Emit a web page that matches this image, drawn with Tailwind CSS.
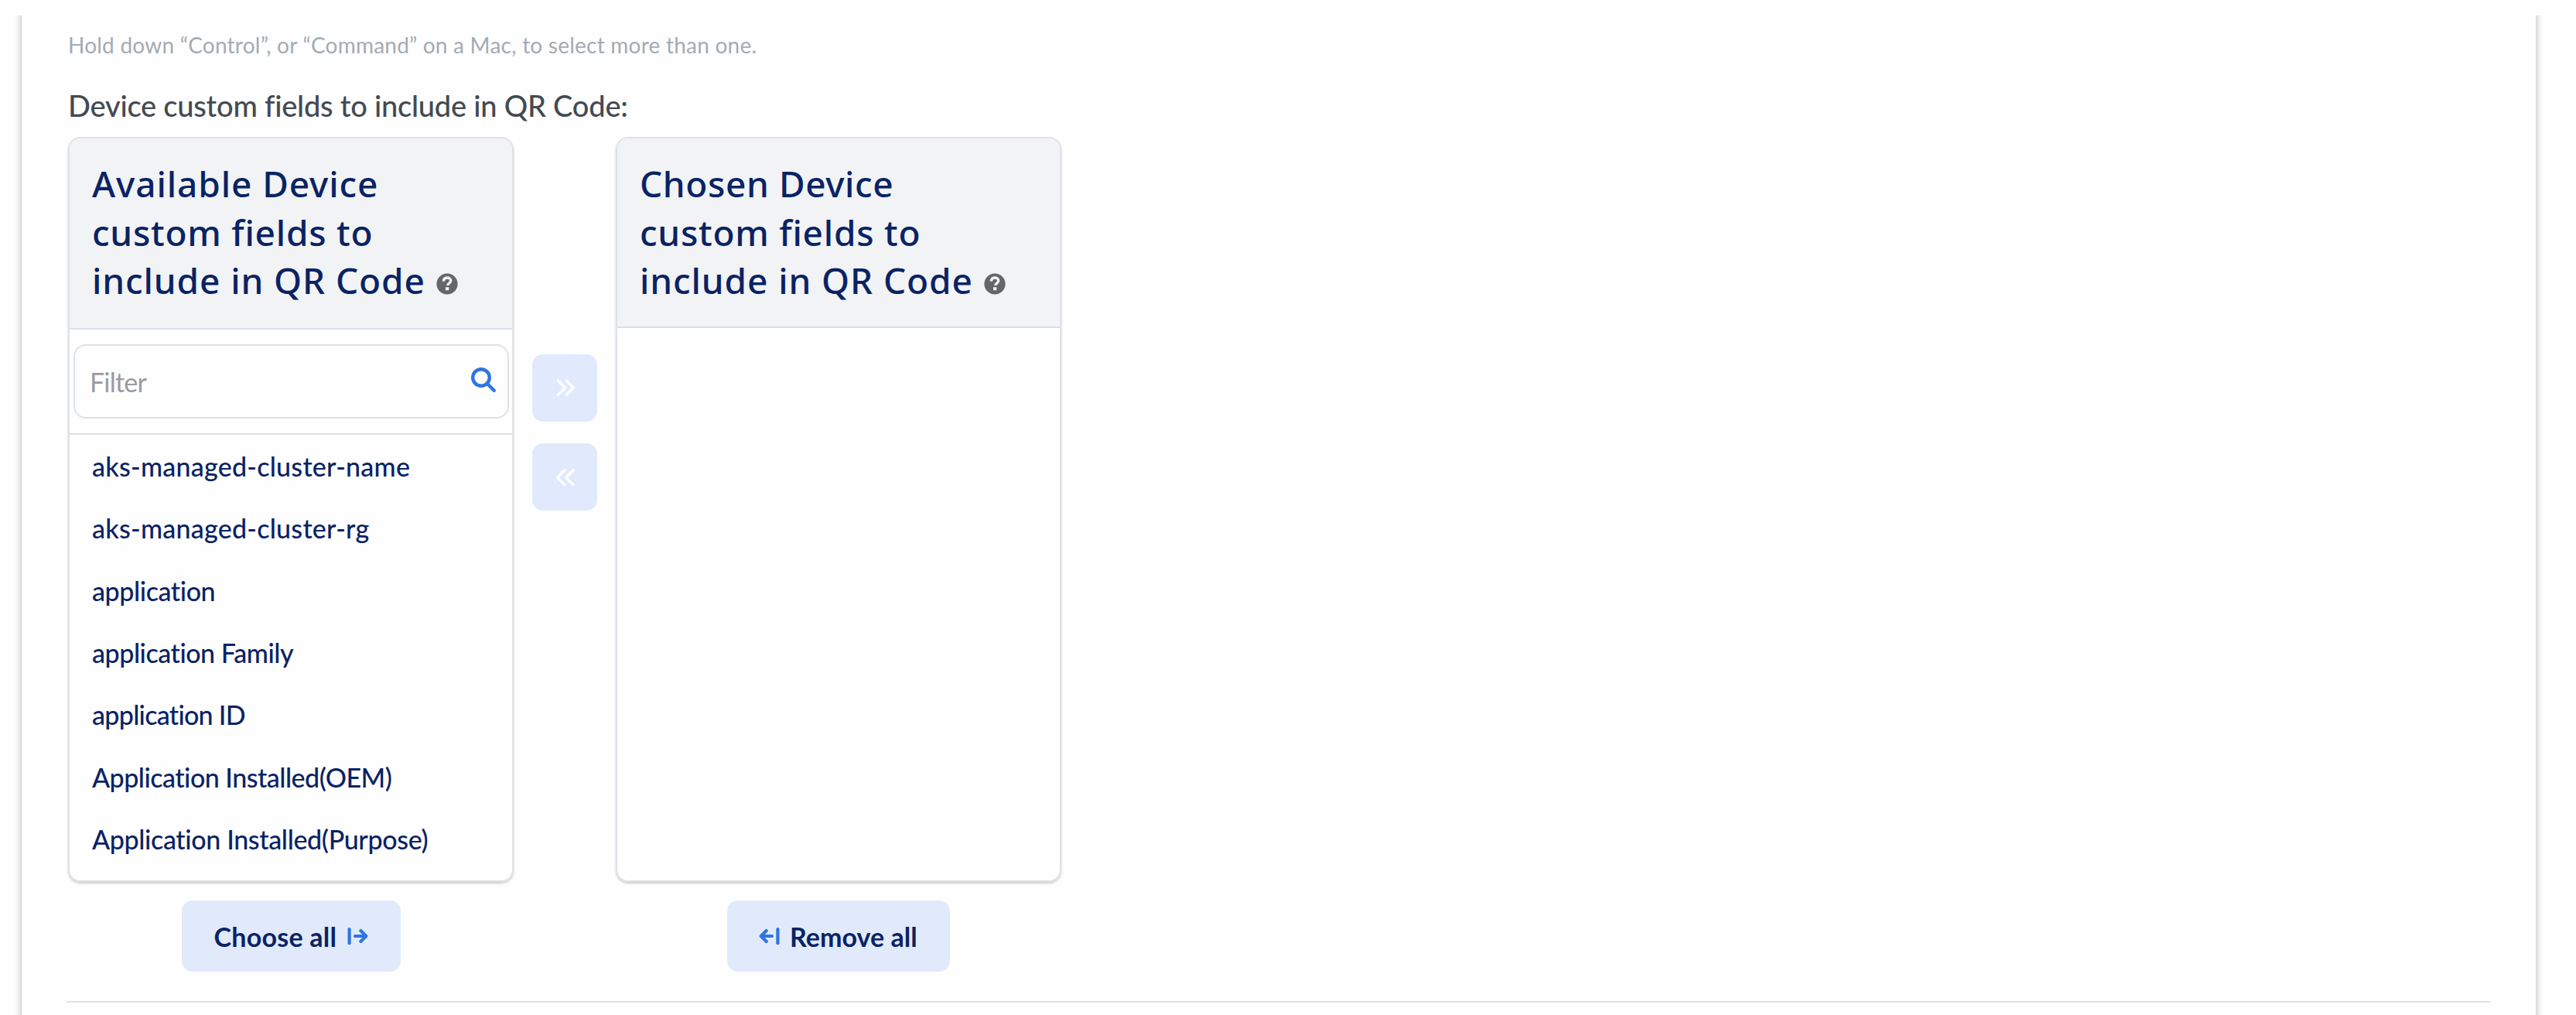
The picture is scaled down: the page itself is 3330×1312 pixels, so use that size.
<!DOCTYPE html>
<html lang="en">
<head>
<meta charset="utf-8">
<title>Device custom fields</title>
<script src="https://cdn.jsdelivr.net/npm/@tailwindcss/browser@4"></script>
</head>
<body class="bg-[#fefefe] font-['Lato',sans-serif] text-[#0a2364]">
<div class="h-[1312px] overflow-hidden pt-5">
<div class="h-[1292px] overflow-hidden">
<main class="-mt-5 ml-7 h-[1352px] w-[3250px] px-[58px] pt-[33px] shadow-[0_0_9px_rgba(0,0,0,0.32)]">
  <div class="px-0.5">
    <p class="h-10 text-[28px] leading-10 tracking-[0.23px] text-[#a4abb3] pt-[5px]">Hold down “Control”, or “Command” on a Mac, to select more than one.</p>
    <h2 class="mt-[38px] h-[66px] text-[38px] font-medium leading-[50px] tracking-[-0.22px] text-[#444a51]">Device custom fields to include in QR Code:</h2>

    <div class="flex">
      <section class="w-[576px]">
        <div class="h-[963px] overflow-hidden rounded-[16px] border-2 border-[#dee1e7] shadow-[0_2px_3px_rgba(0,0,0,0.2)]">
          <h3 class="h-[247px] border-b-2 border-[#dee1e7] bg-[#f2f3f5] pl-[29px] pt-[27px] font-['Noto_Sans',sans-serif] text-[46px] font-medium leading-[62.5px] tracking-[0.9px]">Available Device<br><span class="tracking-[0.75px]">custom fields to</span><br><span class="flex items-center whitespace-nowrap">include in QR Code
            <svg class="ml-[14px] mt-[10px] size-7" viewBox="0 0 28 28"><circle cx="14" cy="14" r="13.6" fill="#666"/><path d="M9.3 10.6C9.5 7.4 11.5 6 14 6c2.7 0 4.7 1.5 4.7 4 0 3.2-3.9 3.1-3.9 6" fill="none" stroke="#f2f3f5" stroke-width="3.4"/><rect x="12" y="18.2" width="4.3" height="4" fill="#f2f3f5"/></svg></span></h3>
          <div class="h-[136px] border-b-2 border-[#dedede] px-[5px] pt-[19px] pr-1">
            <div class="flex h-24 items-center justify-between rounded-[16px] border-2 border-[#dee1e7] pl-[19px] pr-[15px]">
              <span class="text-[34px] tracking-[-0.8px] text-[#9b9b9f]">Filter</span>
              <svg class="-mt-1 size-8" viewBox="0 0 32 32" fill="none" stroke="#2f74e3" stroke-width="4.4" stroke-linecap="round"><circle cx="13" cy="13" r="10.8"/><path d="m21 21 8.7 8.7"/></svg>
            </div>
          </div>
          <ul class="pl-[29px] pt-px text-[34px] font-medium leading-[80.33px]">
            <li class="tracking-[0.25px]">aks-managed-cluster-name</li>
            <li class="tracking-[0.25px]">aks-managed-cluster-rg</li>
            <li class="tracking-[-0.4px]">application</li>
            <li class="tracking-[-0.45px]">application Family</li>
            <li class="tracking-[-0.7px]">application ID</li>
            <li class="tracking-[-0.5px]">Application Installed(OEM)</li>
            <li class="tracking-[-0.35px]">Application Installed(Purpose)</li>
          </ul>
        </div>
        <div class="flex justify-center pt-6">
          <button class="flex h-[92px] w-[283px] items-center rounded-[14px] bg-[#e1eafb] pl-[42px] text-[34px] font-bold tracking-[0.25px]">Choose all
            <svg class="ml-auto mr-[42px] h-6 w-[27px]" viewBox="0 0 27 24" fill="none" stroke="#2f74e3" stroke-width="4.2" stroke-linecap="round" stroke-linejoin="round"><path d="M2.6 3.2v18M10 12h13.6M17.3 5.1l7 6.9-7 6.9"/></svg>
          </button>
        </div>
      </section>

      <div class="flex w-[132px] flex-col items-center gap-7 pt-[281px]">
        <button class="grid h-[87px] w-[84px] place-items-center rounded-[14px] bg-[#e1eafc]"><svg class="-mt-0.5 ml-0.5 h-6 w-6" viewBox="0 0 24 24" fill="none" stroke="#fff" stroke-width="3.4" stroke-linecap="round" stroke-linejoin="round"><path d="m2.3 3 9.4 9.2-9.4 9.2M13.3 3l9 9.2-9 9.2"/></svg></button>
        <button class="grid h-[87px] w-[84px] place-items-center rounded-[14px] bg-[#e1eafc]"><svg class="ml-0.5 h-6 w-6" viewBox="0 0 24 24" fill="none" stroke="#fff" stroke-width="3.4" stroke-linecap="round" stroke-linejoin="round"><path d="m10.7 3-9 9.2 9 9.2M21.7 3l-9 9.2 9 9.2"/></svg></button>
      </div>

      <section class="w-[576px]">
        <div class="h-[963px] overflow-hidden rounded-[16px] border-2 border-[#dee1e7] shadow-[0_2px_3px_rgba(0,0,0,0.2)]">
          <h3 class="h-[245px] border-b-2 border-[#dcdddf] bg-[#f2f3f5] pl-[29px] pt-[27px] font-['Noto_Sans',sans-serif] text-[46px] font-medium leading-[62.5px] tracking-[0.6px]">Chosen Device<br><span class="tracking-[0.75px]">custom fields to</span><br><span class="flex items-center whitespace-nowrap tracking-[0.9px]">include in QR Code
            <svg class="ml-[14px] mt-[10px] size-7" viewBox="0 0 28 28"><circle cx="14" cy="14" r="13.6" fill="#666"/><path d="M9.3 10.6C9.5 7.4 11.5 6 14 6c2.7 0 4.7 1.5 4.7 4 0 3.2-3.9 3.1-3.9 6" fill="none" stroke="#f2f3f5" stroke-width="3.4"/><rect x="12" y="18.2" width="4.3" height="4" fill="#f2f3f5"/></svg></span></h3>
        </div>
        <div class="flex justify-center pt-6">
          <button class="flex h-[92px] w-[288px] items-center rounded-[14px] bg-[#e1eafb] pl-[41px] text-[34px] font-bold tracking-[0.05px]">
            <svg class="mr-[13px] h-6 w-[27px]" viewBox="0 0 27 24" fill="none" stroke="#2f74e3" stroke-width="4.2" stroke-linecap="round" stroke-linejoin="round"><path d="M24.4 3.2v18M17 12H3.4M9.7 5.1l-7 6.9 7 6.9"/></svg>
            Remove all</button>
        </div>
      </section>
    </div>
  </div>
  <hr class="mt-[38px] border-t-2 border-[#dee2e6]">
</main>
</div>
</div>
</body>
</html>
